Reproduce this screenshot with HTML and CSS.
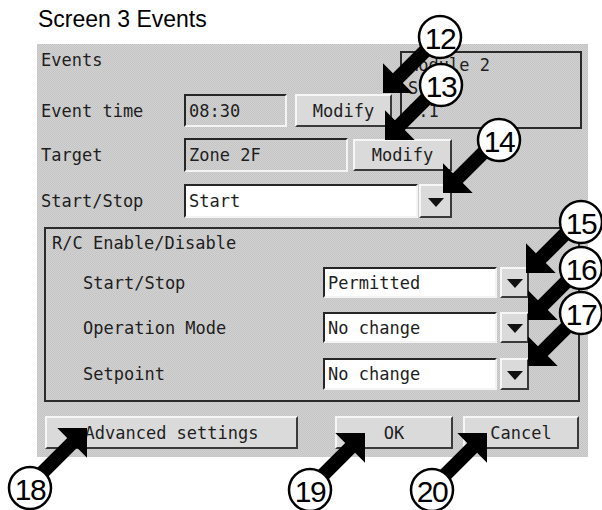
FILE: index.html
```html
<!doctype html>
<html>
  <head>
    <meta charset="utf-8">
    <title>Screen 3 Events</title>
    <link rel="stylesheet" href="styles.css">
  </head>
  <body>
    <h1 class=caption>Screen 3 Events</h1>

    <div class=panel>
      <div class=top>
        <div class=top-left>
          <div class=heading>Events</div>
          <div class=row>
            <span class=label>Event time</span>
            <span class="field time">08:30</span>
            <button class="btn modify">Modify</button>
          </div>
        </div>
        <div class=module>
          <div>Module 2</div>
          <div>Sub</div>
          <div>1.1</div>
        </div>
      </div>

      <div class="row target">
        <span class=label>Target</span>
        <span class="field zone">Zone 2F</span>
        <button class="btn modify2">Modify</button>
      </div>

      <div class="row startstop">
        <span class=label>Start/Stop</span>
        <span class="field white wide">Start</span>
        <button class="btn drop"><i></i></button>
      </div>

      <fieldset class=group>
        <div class=group-title>R/C Enable/Disable</div>
        <div class="row sub r1">
          <span class=label>Start/Stop</span>
          <span class="field white sel">Permitted</span>
          <button class="btn drop small"><i></i></button>
        </div>
        <div class="row sub r2">
          <span class=label>Operation Mode</span>
          <span class="field white sel">No change</span>
          <button class="btn drop small"><i></i></button>
        </div>
        <div class="row sub r3">
          <span class=label>Setpoint</span>
          <span class="field white sel">No change</span>
          <button class="btn drop small"><i></i></button>
        </div>
      </fieldset>

      <div class=buttons>
        <button class="btn advanced">Advanced settings</button>
        <button class="btn ok">OK</button>
        <button class="btn cancel">Cancel</button>
      </div>
    </div>

    <!-- callouts -->
    <svg class=callouts width=602 height=510 viewBox="0 0 602 510">
      <defs>
        <polygon id=arw points="0,0 -21,-21 -21,-7 -80,-7 -80,7 -21,7 -21,21" />
      </defs>
      <use href="#arw" transform="translate(383,93) rotate(135)" />
      <use href="#arw" transform="translate(385,140) rotate(135)" />
      <use href="#arw" transform="translate(443,193) rotate(135)" />
      <use href="#arw" transform="translate(526,273) rotate(135)" />
      <use href="#arw" transform="translate(528,320) rotate(135)" />
      <use href="#arw" transform="translate(528,366) rotate(135)" />
      <use href="#arw" transform="translate(87,428) rotate(-45)" />
      <use href="#arw" transform="translate(365,433) rotate(-45)" />
      <use href="#arw" transform="translate(487,433) rotate(-45)" />

      <g class=num>
        <circle cx=440 cy=37 r=21 /><text x=440 y=38>12</text>
        <circle cx=441 cy=85 r=21 /><text x=441 y=86>13</text>
        <circle cx=499 cy=140 r=21 /><text x=499 y=141>14</text>
        <circle cx=581 cy=222 r=21 /><text x=581 y=223>15</text>
        <circle cx=581 cy=268 r=21 /><text x=581 y=269>16</text>
        <circle cx=581 cy=313 r=21 /><text x=581 y=314>17</text>
        <circle cx=30 cy=488 r=21 /><text x=30 y=489>18</text>
        <circle cx=310 cy=490 r=21 /><text x=310 y=491>19</text>
        <circle cx=432 cy=490 r=21 /><text x=432 y=491>20</text>
      </g>
    </svg>
  </body>
</html>
```

FILE: styles.css
```css
* {
  box-sizing: border-box;
}

body {
  margin: 0;
  width: 602px;
  height: 510px;
  position: relative;
  background: #fff;
  color: #1e1e1e;
  font: 17px "DejaVu Sans Mono", monospace;
}

.caption {
  margin: 0;
  height: 44px;
  padding: 6px 0 0 38px;
  font: normal 23px/26px "Liberation Sans", Arial, sans-serif;
  color: #000;
}

.panel {
  margin-left: 37px;
  width: 551px;
  height: 413px;
  display: flex;
  flex-direction: column;
  background: #cbcbcb repeating-conic-gradient(#c4c4c4 0 25%, #d2d2d2 0 50%) 0 0 / 2px 2px;
}

.top {
  display: flex;
}

.top-left {
  width: 363px;
}

.heading {
  height: 33px;
  line-height: 33px;
  padding-left: 4px;
}

.row {
  display: flex;
  align-items: center;
  height: 34px;
}

.top-left .row {
  margin-top: 17px;
  height: 33px;
}

.label {
  width: 147px;
  padding-left: 4px;
  white-space: pre;
}

.field {
  height: 100%;
  padding-left: 3px;
  display: flex;
  align-items: center;
  border: 2px solid;
  border-color: #262626 #f4f4f4 #f4f4f4 #262626;
}

.field.white {
  background: #fff;
}

.time { width: 103px; }
.zone { width: 164px; }
.wide { width: 234px; }

.btn {
  font: inherit;
  color: inherit;
  height: 100%;
  padding: 0;
  background: #dadada;
  border: 2px solid;
  border-color: #f6f6f6 #3a3a3a #3a3a3a #f6f6f6;
  display: flex;
  align-items: center;
  justify-content: center;
}

.modify {
  width: 97px;
  margin-left: 8px;
}

.module {
  margin-top: 7px;
  width: 182px;
  height: 78px;
  border: 2px solid #2b2b2b;
  padding: 1px 0 0 6px;
  line-height: 23px;
}

.target {
  margin-top: 9px;
}

.modify2 {
  width: 99px;
  height: 32px;
  margin-left: 5px;
}

.startstop {
  margin-top: 12px;
}

.drop {
  width: 33px;
  margin-left: 1px;
}

.drop i {
  width: 0;
  height: 0;
  border-left: 8px solid transparent;
  border-right: 8px solid transparent;
  border-top: 9px solid #111;
  margin-top: 2px;
}

.group {
  margin: 9px 0 0 7px;
  padding: 0;
  width: 536px;
  height: 175px;
  border: 2px solid #2b2b2b;
  min-width: 0;
}

.group-title {
  height: 29px;
  line-height: 29px;
  padding-left: 6px;
}

.sub {
  height: 31px;
}

.sub .label {
  width: 277px;
  padding-left: 37px;
}

.r1 { margin-top: 9px; }
.r2 { margin-top: 14px; }
.r3 { margin-top: 15px; height: 32px; }

.sel { width: 174px; }

.drop.small {
  width: 29px;
  margin-left: 3px;
}

.buttons {
  display: flex;
  height: 33px;
  margin-top: 14px;
}

.advanced {
  width: 253px;
  margin-left: 8px;
}

.ok {
  width: 118px;
  margin-left: 37px;
}

.cancel {
  width: 116px;
  margin-left: 10px;
}

.callouts {
  position: absolute;
  left: 0;
  top: 0;
}

.callouts use {
  fill: #000;
}

.num circle {
  fill: #fff;
  stroke: #000;
  stroke-width: 2.5;
}

.num text {
  font: 30px "Liberation Sans", Arial, sans-serif;
  letter-spacing: -1.5px;
  text-anchor: middle;
  dominant-baseline: central;
  fill: #000;
}
```
